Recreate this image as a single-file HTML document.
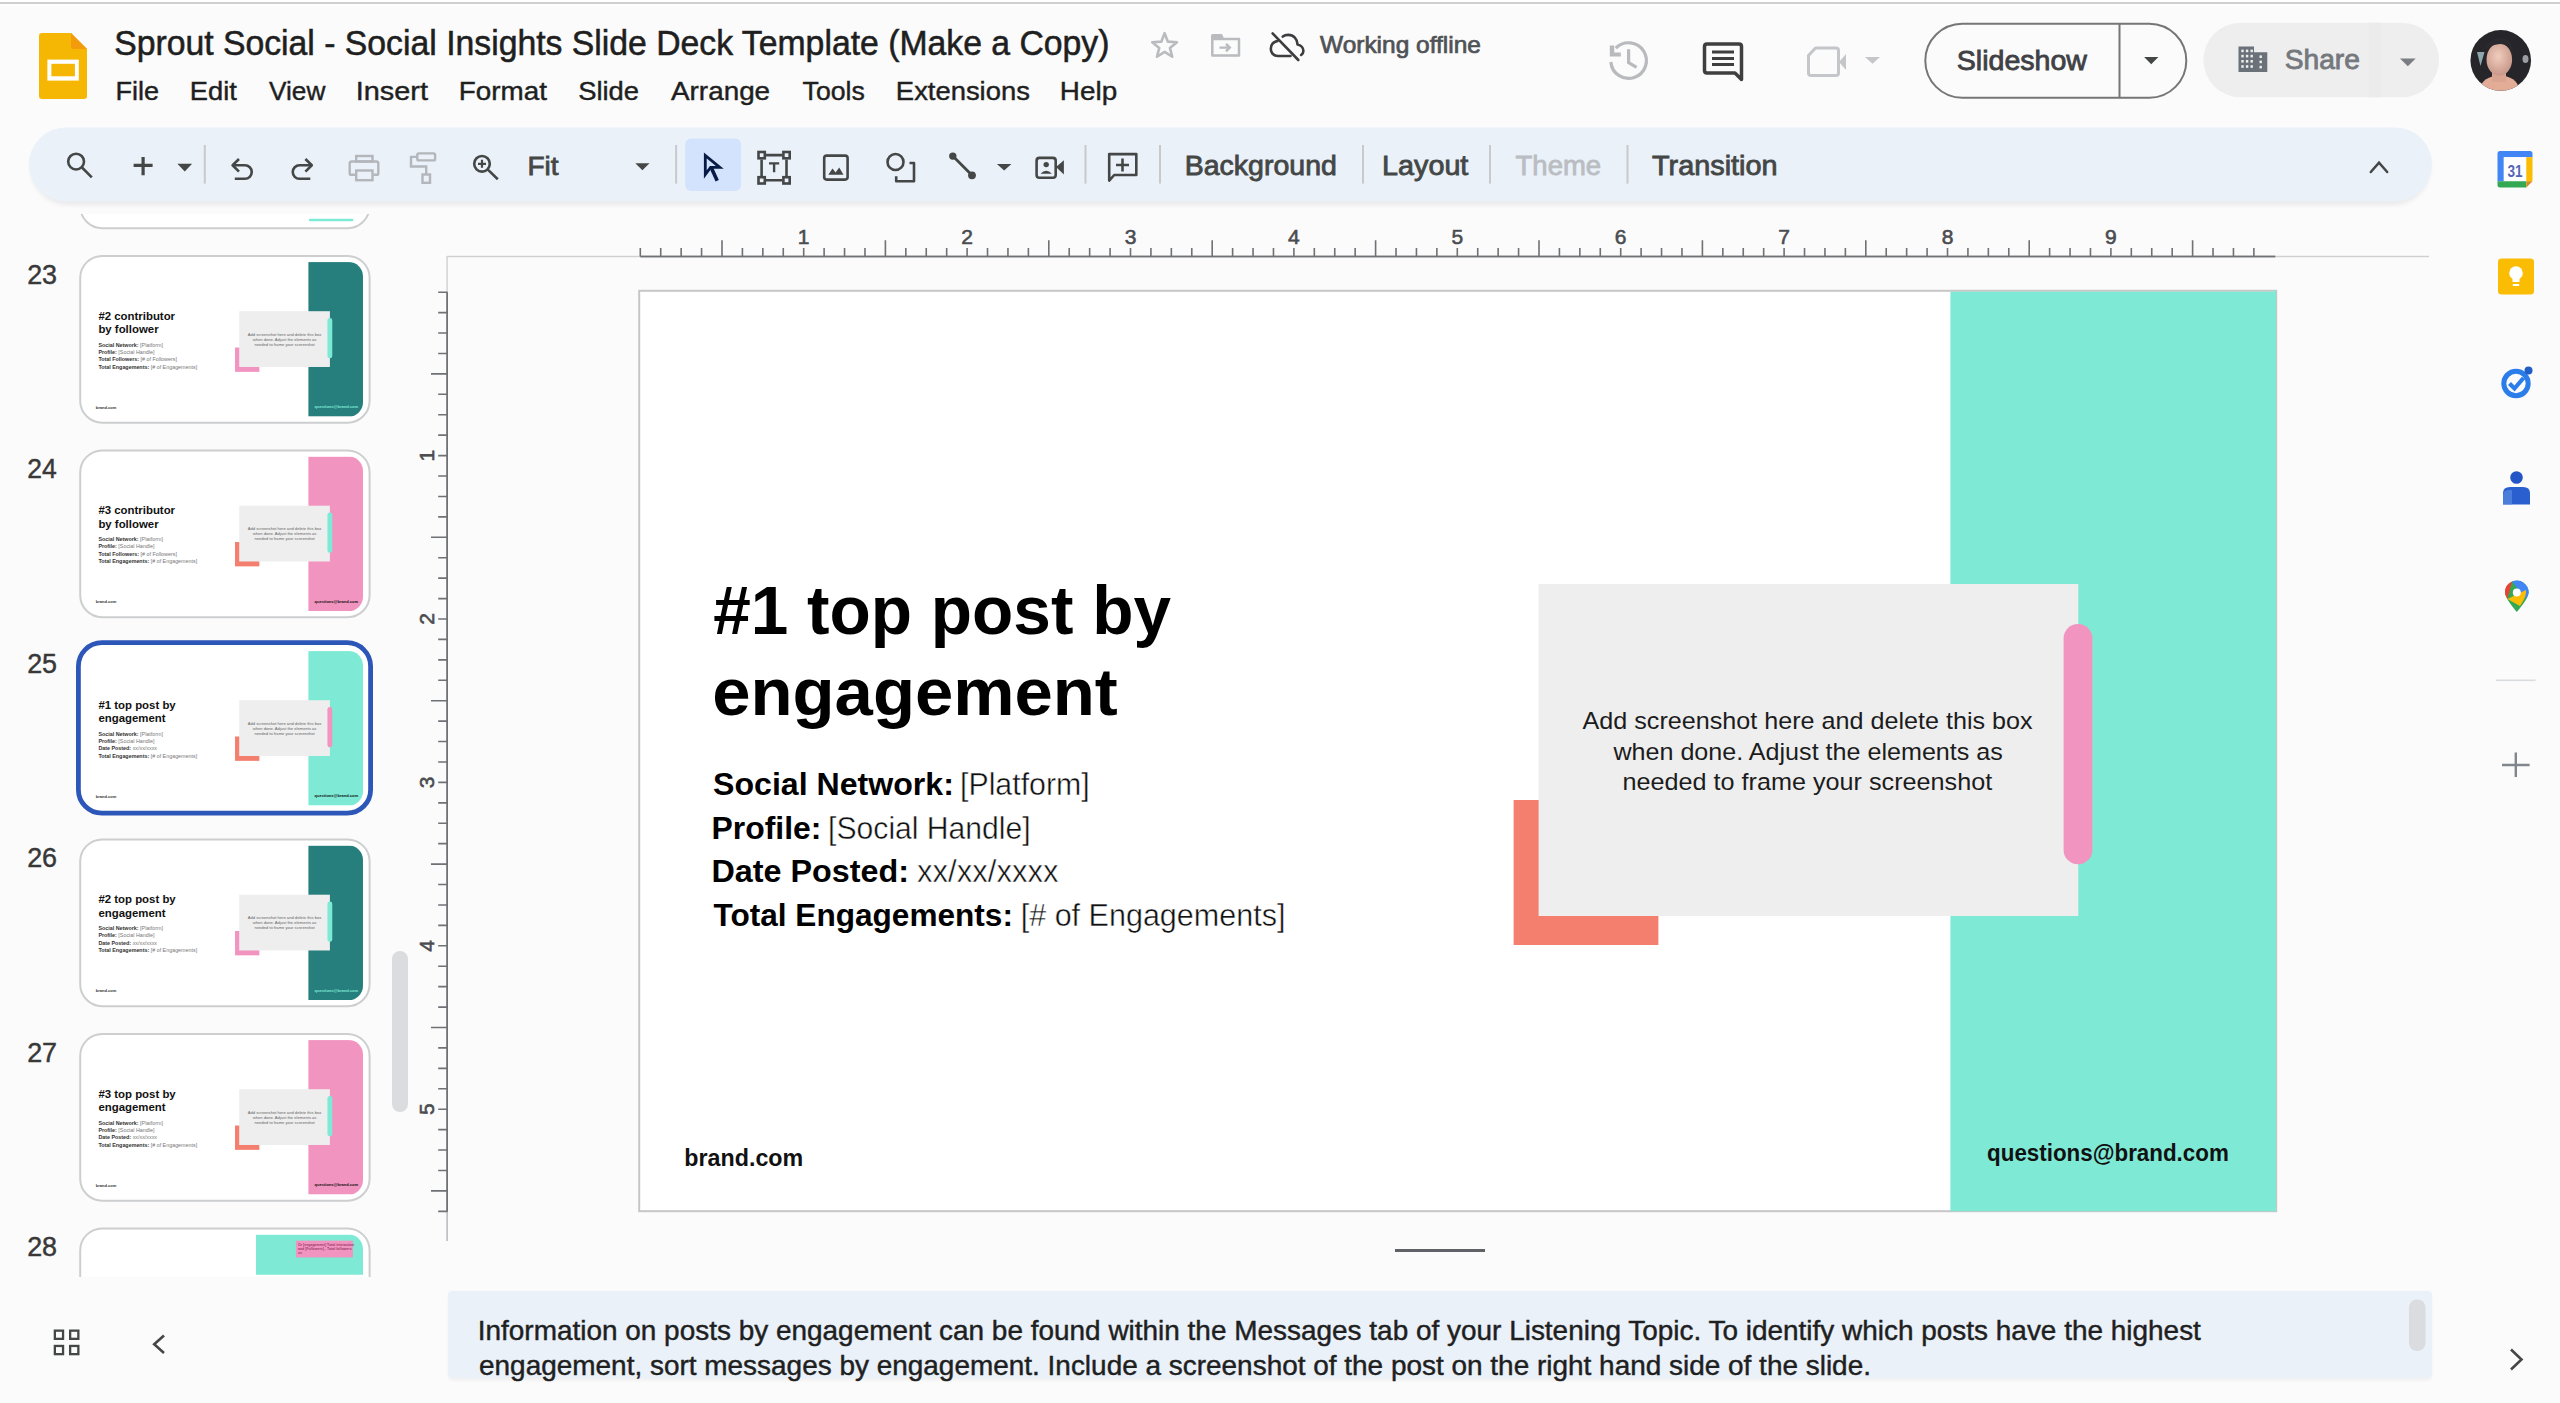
<!DOCTYPE html>
<html><head><meta charset="utf-8"><title>Slides</title>
<style>
*{margin:0;padding:0}
html,body{width:2560px;height:1403px;overflow:hidden;background:#fbfbfb}
svg{display:block;font-family:"Liberation Sans",sans-serif}
</style></head><body>
<svg width="2560" height="1403" viewBox="0 0 2560 1403">
<rect x="0" y="0" width="2560" height="2" fill="#fff"/>
<rect x="0" y="2" width="2560" height="2" fill="#cfcfcf"/>
<rect x="0" y="4" width="2560" height="2" fill="#fdfdfd"/>
<path d="M42,33 H71 L87,49 V96 Q87,99 84,99 H42 Q39,99 39,96 V36 Q39,33 42,33 Z" fill="#f6b704"/>
<path d="M71,33 L87,49 H74 Q71,49 71,46 Z" fill="#f29b0c"/>
<rect x="47.4" y="59.6" width="31.4" height="21" fill="#fff"/>
<rect x="51.4" y="63.8" width="23.5" height="12.5" fill="#f6b704"/>
<polygon points="1164.60,33.20 1167.89,41.67 1176.96,42.18 1169.93,47.93 1172.24,56.72 1164.60,51.80 1156.96,56.72 1159.27,47.93 1152.24,42.18 1161.31,41.67" fill="none" stroke="#b9bbbf" stroke-width="2.6" stroke-linejoin="round"/>
<path d="M1212.3,39 H1239 V55.6 H1212.3 Z" fill="none" stroke="#b9bbbf" stroke-width="2.5" stroke-linejoin="round"/>
<path d="M1211,39.5 V35.5 Q1211,34 1212.5,34 H1222 L1224.5,39.5 Z" fill="#b9bbbf"/>
<path d="M1219.5,47.6 H1230 M1226,43.8 L1229.8,47.6 L1226,51.4" fill="none" stroke="#b9bbbf" stroke-width="2.4"/>
<path d="M1277.5,41 C1273,42 1270.8,45.5 1270.8,49 C1270.8,53 1273.8,56 1277.8,56 H1290.5 M1282.8,36.6 C1284.3,35.4 1286.2,34.9 1288.2,34.9 C1293.6,34.9 1297.4,39 1297.6,44.6 C1301,45.3 1303.4,48 1303.4,51 C1303.4,52.6 1302.6,54 1301.2,55" fill="none" stroke="#3c3d3f" stroke-width="2.6" stroke-linecap="round" stroke-linejoin="round"/>
<path d="M1272.6,33.4 L1298.3,60" stroke="#3c3d3f" stroke-width="2.6" stroke-linecap="round"/>
<path d="M1615.8,48.2 A17.8,17.8 0 1 1 1610.85,62" fill="none" stroke="#b8babe" stroke-width="3.2"/>
<path d="M1609.8,45.5 H1614.2 V52.4 H1620.8 V56.6 H1609.8 Z" fill="#b8babe"/>
<path d="M1628.6,49.2 V62.6 L1636.6,67.4" fill="none" stroke="#b8babe" stroke-width="3.2"/>
<path d="M1707,44 H1739 Q1741.5,44 1741.5,46.5 V79.5 L1735,73 H1707 Q1704.5,73 1704.5,70.5 V46.5 Q1704.5,44 1707,44 Z" fill="none" stroke="#3f3f3f" stroke-width="3.5" stroke-linejoin="round"/>
<path d="M1712,52 H1734 M1712,58.5 H1734 M1712,64.5 H1734" stroke="#3f3f3f" stroke-width="3.2"/>
<path d="M1815.5,48 H1836 Q1838.5,48 1838.5,50.5 V73 Q1838.5,75.5 1836,75.5 H1811 Q1808.5,75.5 1808.5,73 V55.5 Z" fill="none" stroke="#c4c6ca" stroke-width="3" stroke-linejoin="round"/>
<path d="M1839,62 L1846,54 V70 Z" fill="#c4c6ca"/>
<path d="M1865,57 H1880 L1872.5,63.8 Z" fill="#c4c6ca"/>
<rect x="1925.3" y="23.7" width="261" height="74" rx="37" fill="none" stroke="#747775" stroke-width="2"/>
<rect x="2118.5" y="23.7" width="2" height="74" fill="#747775"/>
<path d="M2144.1,57.1 H2158.4 L2151.25,64.2 Z" fill="#444746"/>
<rect x="2203.4" y="22.7" width="235.6" height="74.6" rx="37.3" fill="#eeeeee"/>
<rect x="2369" y="22.7" width="12" height="74.6" fill="#ebebeb"/>
<path d="M2238.5,46.6 H2254 V52.3 H2267.3 V72 H2238.5 Z" fill="#6b7178"/>
<rect x="2241.3" y="49.6" width="2.4" height="2.6" fill="#eeeeee"/>
<rect x="2245.9" y="49.6" width="2.4" height="2.6" fill="#eeeeee"/>
<rect x="2250.5" y="49.6" width="2.4" height="2.6" fill="#eeeeee"/>
<rect x="2241.3" y="54.8" width="2.4" height="2.6" fill="#eeeeee"/>
<rect x="2245.9" y="54.8" width="2.4" height="2.6" fill="#eeeeee"/>
<rect x="2250.5" y="54.8" width="2.4" height="2.6" fill="#eeeeee"/>
<rect x="2241.3" y="60.0" width="2.4" height="2.6" fill="#eeeeee"/>
<rect x="2245.9" y="60.0" width="2.4" height="2.6" fill="#eeeeee"/>
<rect x="2250.5" y="60.0" width="2.4" height="2.6" fill="#eeeeee"/>
<rect x="2241.3" y="65.2" width="2.4" height="2.6" fill="#eeeeee"/>
<rect x="2245.9" y="65.2" width="2.4" height="2.6" fill="#eeeeee"/>
<rect x="2250.5" y="65.2" width="2.4" height="2.6" fill="#eeeeee"/>
<rect x="2259.5" y="55.4" width="2.4" height="2.6" fill="#eeeeee"/>
<rect x="2259.5" y="60.6" width="2.4" height="2.6" fill="#eeeeee"/>
<rect x="2259.5" y="65.8" width="2.4" height="2.6" fill="#eeeeee"/>
<path d="M2400,58.6 H2415.7 L2407.85,66.3 Z" fill="#7a7d82"/>
<defs><clipPath id="av"><circle cx="2500.75" cy="60.4" r="30.3"/></clipPath><radialGradient id="face" cx="0.45" cy="0.4" r="0.6"><stop offset="0" stop-color="#f0cdbd"/><stop offset="1" stop-color="#c8988a"/></radialGradient></defs>
<g clip-path="url(#av)"><rect x="2469" y="29" width="63" height="63" fill="#26262a"/><path d="M2477,52 L2484.5,52 L2480.5,66 Z" fill="#8ea6ad"/><ellipse cx="2525.5" cy="59" rx="3" ry="4" fill="#9a9ea3"/><ellipse cx="2499.5" cy="88.5" rx="19" ry="13" fill="#e2ac96"/><rect x="2492" y="70" width="14" height="12" fill="#d9a592"/><ellipse cx="2499.3" cy="59.5" rx="12.8" ry="16.2" fill="url(#face)"/><path d="M2484,50 Q2490,36 2504,38 Q2514,40 2513,58 Q2511,44 2500,44 Q2490,45 2484,50 Z" fill="#2a2a2e"/></g>
<defs><filter id="tbsh" x="-5%" y="-50%" width="110%" height="200%"><feGaussianBlur stdDeviation="2.5"/></filter></defs>
<rect x="31" y="131" width="2399" height="74" rx="37" fill="#000" opacity="0.07" filter="url(#tbsh)"/>
<rect x="29" y="127.5" width="2403" height="74" rx="37" fill="#eaf1f9"/>
<circle cx="76.1" cy="161.6" r="7.9" fill="none" stroke="#444746" stroke-width="2.6"/>
<path d="M82,167.5 L91.8,177.3" fill="none" stroke="#444746" stroke-width="2.6"/>
<path d="M133.6,165.3 H152.6 M143.1,156.9 V175.3" fill="none" stroke="#444746" stroke-width="3.2"/>
<path d="M177.4,163.7 H192.1 L184.75,171.6 Z" fill="#444746"/>
<rect x="203.8" y="145" width="2" height="38.6" fill="#c7c9cc"/>
<rect x="675.1" y="145" width="2" height="38.6" fill="#c7c9cc"/>
<rect x="1084.5" y="145" width="2" height="38.6" fill="#c7c9cc"/>
<rect x="1159.0" y="145" width="2" height="38.6" fill="#c7c9cc"/>
<rect x="1362.0" y="145" width="2" height="38.6" fill="#c7c9cc"/>
<rect x="1489.0" y="145" width="2" height="38.6" fill="#c7c9cc"/>
<rect x="1626.5" y="145" width="2" height="38.6" fill="#c7c9cc"/>
<path d="M239,159 L232.6,165.3 L239,171.6" fill="none" stroke="#444746" stroke-width="2.6" stroke-linejoin="round"/>
<path d="M233.5,165.3 H245 A6.75,6.75 0 0 1 245,178.8 H234.8" fill="none" stroke="#444746" stroke-width="2.6"/>
<path d="M305.4,159 L311.8,165.3 L305.4,171.6" fill="none" stroke="#444746" stroke-width="2.6" stroke-linejoin="round"/>
<path d="M311,165.3 H299.5 A6.75,6.75 0 0 0 299.5,178.8 H310.3" fill="none" stroke="#444746" stroke-width="2.6"/>
<rect x="356.2" y="156" width="16.3" height="5.5" fill="none" stroke="#b3b6bb" stroke-width="2.4"/>
<path d="M355,174.8 H350.5 Q349.7,174.8 349.7,174 V163.5 Q349.7,161.5 351.7,161.5 H376.3 Q378.3,161.5 378.3,163.5 V174 Q378.3,174.8 377.5,174.8 H373.5" fill="none" stroke="#b3b6bb" stroke-width="2.4"/>
<rect x="356.2" y="170.5" width="16.3" height="9.7" fill="none" stroke="#b3b6bb" stroke-width="2.4"/>
<rect x="417.3" y="153.4" width="17.8" height="7" rx="1.5" fill="none" stroke="#b3b6bb" stroke-width="2.4"/>
<path d="M417.3,156.9 H411 V166.5 H426.2 V174.5" fill="none" stroke="#b3b6bb" stroke-width="2.4"/>
<rect x="422.5" y="174.5" width="7.5" height="8.3" fill="none" stroke="#b3b6bb" stroke-width="2.4"/>
<circle cx="482" cy="163.8" r="7.8" fill="none" stroke="#444746" stroke-width="2.6"/>
<path d="M487.6,169.4 L497.8,179.3" fill="none" stroke="#444746" stroke-width="2.6"/>
<path d="M478,163.8 H486 M482,159.8 V167.8" fill="none" stroke="#444746" stroke-width="2.2"/>
<path d="M635.3,163.2 H649.5 L642.4,170.3 Z" fill="#444746"/>
<rect x="685.2" y="138.6" width="55.9" height="52.4" rx="6" fill="#d3e3fd"/>
<path d="M705.3,155.5 V174.5 L710.6,167.4 L719.8,167.4 Z" fill="none" stroke="#071b44" stroke-width="2.8" stroke-linejoin="miter"/>
<path d="M711.2,167.5 L717.2,180.8" fill="none" stroke="#071b44" stroke-width="3.6"/>
<rect x="758.5" y="152.0" width="6.3" height="6.3" fill="none" stroke="#444746" stroke-width="2.6"/>
<rect x="783.4" y="152.0" width="6.3" height="6.3" fill="none" stroke="#444746" stroke-width="2.6"/>
<rect x="758.5" y="177.2" width="6.3" height="6.3" fill="none" stroke="#444746" stroke-width="2.6"/>
<rect x="783.4" y="177.2" width="6.3" height="6.3" fill="none" stroke="#444746" stroke-width="2.6"/>
<path d="M766,155.1 H782.2 M766,180.3 H782.2 M761.6,159.5 V176 M786.5,159.5 V176" fill="none" stroke="#444746" stroke-width="2.6"/>
<path d="M769,163.4 H779.2 M774.1,163.4 V172.2" fill="none" stroke="#444746" stroke-width="2.4"/>
<rect x="824.2" y="155.6" width="23.4" height="24" rx="2.5" fill="none" stroke="#444746" stroke-width="2.6"/>
<path d="M828.3,174.8 L832.5,168.6 L835.6,172.6 L839.2,167.6 L843.5,174.8 Z" fill="#444746"/>
<circle cx="895.5" cy="162" r="8" fill="none" stroke="#444746" stroke-width="2.6"/>
<path d="M909.5,163 H914 V181.2 H896.2 V176.2" fill="none" stroke="#444746" stroke-width="2.6" stroke-linejoin="round"/>
<path d="M952.8,156.1 L972,175.3" fill="none" stroke="#444746" stroke-width="2.8"/>
<circle cx="952.8" cy="156.1" r="3.7" fill="#444746"/><circle cx="972" cy="175.3" r="3.9" fill="#444746"/>
<path d="M996.9,164 H1011.4 L1004.15,170.6 Z" fill="#444746"/>
<rect x="1036.6" y="157.9" width="19.1" height="19.9" rx="2.8" fill="none" stroke="#444746" stroke-width="2.6"/>
<path d="M1056,167 L1063.9,160.3 V174.4 Z" fill="#444746"/>
<circle cx="1046.2" cy="164.6" r="2.7" fill="#444746"/>
<path d="M1040.5,173.8 Q1046.2,167.6 1051.9,173.8 Z" fill="#444746"/>
<path d="M1109.2,154.1 H1136.3 V175 H1114.2 L1109.2,180.6 Z" fill="none" stroke="#444746" stroke-width="2.6" stroke-linejoin="round"/>
<path d="M1116,165 H1129 M1122.5,158.6 V171.4" fill="none" stroke="#444746" stroke-width="2.6"/>
<path d="M2370.8,172 L2379,162.6 L2387.2,172" fill="none" stroke="#444746" stroke-width="2.5" stroke-linecap="round"/>
<defs><clipPath id="film"><rect x="0" y="214" width="440" height="1063"/></clipPath></defs>
<g clip-path="url(#film)">
<rect x="80.2" y="61.4" width="289.4" height="166.8" rx="22" fill="#fff" stroke="#cdcecf" stroke-width="2"/>
<defs><clipPath id="tc22"><rect x="0" y="0" width="1635" height="919.5" rx="85"/></clipPath></defs>
<g transform="translate(88.3 67.6) scale(0.168)"><g clip-path="url(#tc22)">
<rect x="1313" y="900" width="265" height="14" rx="7" fill="#7ee9d5"/>
</g></g>
<rect x="80.2" y="255.9" width="289.4" height="166.8" rx="22" fill="#fff" stroke="#cdcecf" stroke-width="2"/>
<defs><clipPath id="tc23"><rect x="0" y="0" width="1635" height="919.5" rx="85"/></clipPath></defs>
<g transform="translate(88.3 262.1) scale(0.168)"><g clip-path="url(#tc23)">
<rect x="1310.2" y="0" width="325" height="919.5" fill="#267e7d"/>
<rect x="873.4" y="508.3" width="144.8" height="145" fill="#f294c0"/>
<rect x="898.4" y="292.3" width="539.7" height="332" fill="#eeeeee"/>
<rect x="1423.4" y="332.3" width="28.8" height="240.3" rx="14.4" fill="#7ee9d5"/>
<text x="60" y="341.9" font-size="68" font-weight="700" fill="#111">#2 contributor</text>
<text x="60" y="423.1" font-size="68" font-weight="700" fill="#111">by follower</text>
<text x="60" y="502.8" font-size="32" fill="#777"><tspan font-weight="700" fill="#333">Social Network:</tspan> [Platform]</text>
<text x="60" y="546.8" font-size="32" fill="#777"><tspan font-weight="700" fill="#333">Profile:</tspan> [Social Handle]</text>
<text x="60" y="590.8" font-size="32" fill="#777"><tspan font-weight="700" fill="#333">Total Followers:</tspan> [# of Followers]</text>
<text x="60" y="634.8" font-size="32" fill="#777"><tspan font-weight="700" fill="#333">Total Engagements:</tspan> [# of Engagements]</text>
<text x="1168.3" y="437.3" font-size="24.5" fill="#666" text-anchor="middle">Add screenshot here and delete this box</text>
<text x="1168.3" y="467.8" font-size="24.5" fill="#666" text-anchor="middle">when done. Adjust the elements as</text>
<text x="1168.3" y="498.3" font-size="24.5" fill="#666" text-anchor="middle">needed to frame your screenshot</text>
<text x="45" y="874.3" font-size="24" font-weight="700" fill="#333">brand.com</text>
<text x="1347" y="869" font-size="24" font-weight="700" fill="#7ee9d5">questions@brand.com</text>
</g></g>
<rect x="80.2" y="450.4" width="289.4" height="166.8" rx="22" fill="#fff" stroke="#cdcecf" stroke-width="2"/>
<defs><clipPath id="tc24"><rect x="0" y="0" width="1635" height="919.5" rx="85"/></clipPath></defs>
<g transform="translate(88.3 456.6) scale(0.168)"><g clip-path="url(#tc24)">
<rect x="1310.2" y="0" width="325" height="919.5" fill="#f294c0"/>
<rect x="873.4" y="508.3" width="144.8" height="145" fill="#f47f6f"/>
<rect x="898.4" y="292.3" width="539.7" height="332" fill="#eeeeee"/>
<rect x="1423.4" y="332.3" width="28.8" height="240.3" rx="14.4" fill="#7ee9d5"/>
<text x="60" y="341.9" font-size="68" font-weight="700" fill="#111">#3 contributor</text>
<text x="60" y="423.1" font-size="68" font-weight="700" fill="#111">by follower</text>
<text x="60" y="502.8" font-size="32" fill="#777"><tspan font-weight="700" fill="#333">Social Network:</tspan> [Platform]</text>
<text x="60" y="546.8" font-size="32" fill="#777"><tspan font-weight="700" fill="#333">Profile:</tspan> [Social Handle]</text>
<text x="60" y="590.8" font-size="32" fill="#777"><tspan font-weight="700" fill="#333">Total Followers:</tspan> [# of Followers]</text>
<text x="60" y="634.8" font-size="32" fill="#777"><tspan font-weight="700" fill="#333">Total Engagements:</tspan> [# of Engagements]</text>
<text x="1168.3" y="437.3" font-size="24.5" fill="#666" text-anchor="middle">Add screenshot here and delete this box</text>
<text x="1168.3" y="467.8" font-size="24.5" fill="#666" text-anchor="middle">when done. Adjust the elements as</text>
<text x="1168.3" y="498.3" font-size="24.5" fill="#666" text-anchor="middle">needed to frame your screenshot</text>
<text x="45" y="874.3" font-size="24" font-weight="700" fill="#333">brand.com</text>
<text x="1347" y="869" font-size="24" font-weight="700" fill="#111">questions@brand.com</text>
</g></g>
<rect x="80.2" y="644.9" width="289.4" height="166.8" rx="22" fill="#fff" stroke="#fff" stroke-width="2"/>
<defs><clipPath id="tc25"><rect x="0" y="0" width="1635" height="919.5" rx="85"/></clipPath></defs>
<g transform="translate(88.3 651.1) scale(0.168)"><g clip-path="url(#tc25)">
<rect x="1310.2" y="0" width="325" height="919.5" fill="#7ee9d5"/>
<rect x="873.4" y="508.3" width="144.8" height="145" fill="#f47f6f"/>
<rect x="898.4" y="292.3" width="539.7" height="332" fill="#eeeeee"/>
<rect x="1423.4" y="332.3" width="28.8" height="240.3" rx="14.4" fill="#f294c0"/>
<text x="60" y="341.9" font-size="68" font-weight="700" fill="#111">#1 top post by</text>
<text x="60" y="423.1" font-size="68" font-weight="700" fill="#111">engagement</text>
<text x="60" y="502.8" font-size="32" fill="#777"><tspan font-weight="700" fill="#333">Social Network:</tspan> [Platform]</text>
<text x="60" y="546.8" font-size="32" fill="#777"><tspan font-weight="700" fill="#333">Profile:</tspan> [Social Handle]</text>
<text x="60" y="590.8" font-size="32" fill="#777"><tspan font-weight="700" fill="#333">Date Posted:</tspan> xx/xx/xxxx</text>
<text x="60" y="634.8" font-size="32" fill="#777"><tspan font-weight="700" fill="#333">Total Engagements:</tspan> [# of Engagements]</text>
<text x="1168.3" y="437.3" font-size="24.5" fill="#666" text-anchor="middle">Add screenshot here and delete this box</text>
<text x="1168.3" y="467.8" font-size="24.5" fill="#666" text-anchor="middle">when done. Adjust the elements as</text>
<text x="1168.3" y="498.3" font-size="24.5" fill="#666" text-anchor="middle">needed to frame your screenshot</text>
<text x="45" y="874.3" font-size="24" font-weight="700" fill="#333">brand.com</text>
<text x="1347" y="869" font-size="24" font-weight="700" fill="#111">questions@brand.com</text>
</g></g>
<rect x="80.2" y="839.4" width="289.4" height="166.8" rx="22" fill="#fff" stroke="#cdcecf" stroke-width="2"/>
<defs><clipPath id="tc26"><rect x="0" y="0" width="1635" height="919.5" rx="85"/></clipPath></defs>
<g transform="translate(88.3 845.6) scale(0.168)"><g clip-path="url(#tc26)">
<rect x="1310.2" y="0" width="325" height="919.5" fill="#267e7d"/>
<rect x="873.4" y="508.3" width="144.8" height="145" fill="#f294c0"/>
<rect x="898.4" y="292.3" width="539.7" height="332" fill="#eeeeee"/>
<rect x="1423.4" y="332.3" width="28.8" height="240.3" rx="14.4" fill="#7ee9d5"/>
<text x="60" y="341.9" font-size="68" font-weight="700" fill="#111">#2 top post by</text>
<text x="60" y="423.1" font-size="68" font-weight="700" fill="#111">engagement</text>
<text x="60" y="502.8" font-size="32" fill="#777"><tspan font-weight="700" fill="#333">Social Network:</tspan> [Platform]</text>
<text x="60" y="546.8" font-size="32" fill="#777"><tspan font-weight="700" fill="#333">Profile:</tspan> [Social Handle]</text>
<text x="60" y="590.8" font-size="32" fill="#777"><tspan font-weight="700" fill="#333">Date Posted:</tspan> xx/xx/xxxx</text>
<text x="60" y="634.8" font-size="32" fill="#777"><tspan font-weight="700" fill="#333">Total Engagements:</tspan> [# of Engagements]</text>
<text x="1168.3" y="437.3" font-size="24.5" fill="#666" text-anchor="middle">Add screenshot here and delete this box</text>
<text x="1168.3" y="467.8" font-size="24.5" fill="#666" text-anchor="middle">when done. Adjust the elements as</text>
<text x="1168.3" y="498.3" font-size="24.5" fill="#666" text-anchor="middle">needed to frame your screenshot</text>
<text x="45" y="874.3" font-size="24" font-weight="700" fill="#333">brand.com</text>
<text x="1347" y="869" font-size="24" font-weight="700" fill="#7ee9d5">questions@brand.com</text>
</g></g>
<rect x="80.2" y="1033.9" width="289.4" height="166.8" rx="22" fill="#fff" stroke="#cdcecf" stroke-width="2"/>
<defs><clipPath id="tc27"><rect x="0" y="0" width="1635" height="919.5" rx="85"/></clipPath></defs>
<g transform="translate(88.3 1040.1) scale(0.168)"><g clip-path="url(#tc27)">
<rect x="1310.2" y="0" width="325" height="919.5" fill="#f294c0"/>
<rect x="873.4" y="508.3" width="144.8" height="145" fill="#f47f6f"/>
<rect x="898.4" y="292.3" width="539.7" height="332" fill="#eeeeee"/>
<rect x="1423.4" y="332.3" width="28.8" height="240.3" rx="14.4" fill="#7ee9d5"/>
<text x="60" y="341.9" font-size="68" font-weight="700" fill="#111">#3 top post by</text>
<text x="60" y="423.1" font-size="68" font-weight="700" fill="#111">engagement</text>
<text x="60" y="502.8" font-size="32" fill="#777"><tspan font-weight="700" fill="#333">Social Network:</tspan> [Platform]</text>
<text x="60" y="546.8" font-size="32" fill="#777"><tspan font-weight="700" fill="#333">Profile:</tspan> [Social Handle]</text>
<text x="60" y="590.8" font-size="32" fill="#777"><tspan font-weight="700" fill="#333">Date Posted:</tspan> xx/xx/xxxx</text>
<text x="60" y="634.8" font-size="32" fill="#777"><tspan font-weight="700" fill="#333">Total Engagements:</tspan> [# of Engagements]</text>
<text x="1168.3" y="437.3" font-size="24.5" fill="#666" text-anchor="middle">Add screenshot here and delete this box</text>
<text x="1168.3" y="467.8" font-size="24.5" fill="#666" text-anchor="middle">when done. Adjust the elements as</text>
<text x="1168.3" y="498.3" font-size="24.5" fill="#666" text-anchor="middle">needed to frame your screenshot</text>
<text x="45" y="874.3" font-size="24" font-weight="700" fill="#333">brand.com</text>
<text x="1347" y="869" font-size="24" font-weight="700" fill="#111">questions@brand.com</text>
</g></g>
<rect x="80.2" y="1228.4" width="289.4" height="166.8" rx="22" fill="#fff" stroke="#cdcecf" stroke-width="2"/>
<defs><clipPath id="tc28"><rect x="0" y="0" width="1635" height="919.5" rx="85"/></clipPath></defs>
<g transform="translate(88.3 1234.6) scale(0.168)"><g clip-path="url(#tc28)">
<rect x="998" y="0" width="637" height="239" fill="#7ee9d5"/>
<rect x="1236" y="36" width="339" height="100" fill="#f294c0"/>
<text x="1248" y="66" font-size="21" font-weight="700" fill="#9c3a6c">Or [engagement] Total interaction</text>
<text x="1248" y="92" font-size="21" font-weight="700" fill="#9c3a6c">and [Followers] - Total followers</text>
<text x="1248" y="118" font-size="21" font-weight="700" fill="#9c3a6c">xx</text>
</g></g>
<rect x="78.4" y="642.7" width="292.2" height="170.5" rx="23.5" fill="none" stroke="#2c56b8" stroke-width="4.8"/>
</g>
<rect x="392" y="951" width="16" height="161" rx="8" fill="#dadce0"/>
<rect x="54.85" y="1330.65" width="8.2" height="8.2" fill="none" stroke="#444746" stroke-width="2.3"/>
<rect x="70.15" y="1330.65" width="8.2" height="8.2" fill="none" stroke="#444746" stroke-width="2.3"/>
<rect x="54.85" y="1345.95" width="8.2" height="8.2" fill="none" stroke="#444746" stroke-width="2.3"/>
<rect x="70.15" y="1345.95" width="8.2" height="8.2" fill="none" stroke="#444746" stroke-width="2.3"/>
<path d="M164,1335.5 L154.2,1344.3 L164,1353" fill="none" stroke="#444746" stroke-width="2.6"/>
<rect x="447" y="255.8" width="1982" height="1.4" fill="#cfd0d2"/>
<rect x="640.3" y="255.6" width="1635" height="1.8" fill="#6f7175"/>
<path d="M640.30,248 V256.5 M660.72,248 V256.5 M681.15,248 V256.5 M701.57,248 V256.5 M722.00,240.3 V256.5 M742.42,248 V256.5 M762.85,248 V256.5 M783.27,248 V256.5 M803.70,248 V256.5 M824.12,248 V256.5 M844.55,248 V256.5 M864.97,248 V256.5 M885.40,240.3 V256.5 M905.83,248 V256.5 M926.25,248 V256.5 M946.67,248 V256.5 M967.10,248 V256.5 M987.52,248 V256.5 M1007.95,248 V256.5 M1028.38,248 V256.5 M1048.80,240.3 V256.5 M1069.22,248 V256.5 M1089.65,248 V256.5 M1110.08,248 V256.5 M1130.50,248 V256.5 M1150.92,248 V256.5 M1171.35,248 V256.5 M1191.78,248 V256.5 M1212.20,240.3 V256.5 M1232.62,248 V256.5 M1253.05,248 V256.5 M1273.47,248 V256.5 M1293.90,248 V256.5 M1314.32,248 V256.5 M1334.75,248 V256.5 M1355.17,248 V256.5 M1375.60,240.3 V256.5 M1396.03,248 V256.5 M1416.45,248 V256.5 M1436.88,248 V256.5 M1457.30,248 V256.5 M1477.72,248 V256.5 M1498.15,248 V256.5 M1518.57,248 V256.5 M1539.00,240.3 V256.5 M1559.42,248 V256.5 M1579.85,248 V256.5 M1600.28,248 V256.5 M1620.70,248 V256.5 M1641.12,248 V256.5 M1661.55,248 V256.5 M1681.97,248 V256.5 M1702.40,240.3 V256.5 M1722.83,248 V256.5 M1743.25,248 V256.5 M1763.67,248 V256.5 M1784.10,248 V256.5 M1804.53,248 V256.5 M1824.95,248 V256.5 M1845.38,248 V256.5 M1865.80,240.3 V256.5 M1886.22,248 V256.5 M1906.65,248 V256.5 M1927.08,248 V256.5 M1947.50,248 V256.5 M1967.92,248 V256.5 M1988.35,248 V256.5 M2008.78,248 V256.5 M2029.20,240.3 V256.5 M2049.62,248 V256.5 M2070.05,248 V256.5 M2090.47,248 V256.5 M2110.90,248 V256.5 M2131.32,248 V256.5 M2151.75,248 V256.5 M2172.18,248 V256.5 M2192.60,240.3 V256.5 M2213.03,248 V256.5 M2233.45,248 V256.5 M2253.88,248 V256.5" stroke="#6f7175" stroke-width="1.6"/>
<rect x="446.4" y="256" width="1.4" height="36" fill="#cfd0d2"/>
<rect x="446.3" y="1211" width="1.6" height="30" fill="#b9bbbe"/>
<rect x="446.2" y="292.2" width="1.8" height="919.2" fill="#6f7175"/>
<path d="M438.2,292.20 H447.5 M438.2,312.62 H447.5 M438.2,333.05 H447.5 M438.2,353.48 H447.5 M431,373.90 H447.5 M438.2,394.32 H447.5 M438.2,414.75 H447.5 M438.2,435.17 H447.5 M438.2,455.60 H447.5 M438.2,476.02 H447.5 M438.2,496.45 H447.5 M438.2,516.88 H447.5 M431,537.30 H447.5 M438.2,557.73 H447.5 M438.2,578.15 H447.5 M438.2,598.58 H447.5 M438.2,619.00 H447.5 M438.2,639.42 H447.5 M438.2,659.85 H447.5 M438.2,680.27 H447.5 M431,700.70 H447.5 M438.2,721.12 H447.5 M438.2,741.55 H447.5 M438.2,761.98 H447.5 M438.2,782.40 H447.5 M438.2,802.83 H447.5 M438.2,823.25 H447.5 M438.2,843.67 H447.5 M431,864.10 H447.5 M438.2,884.53 H447.5 M438.2,904.95 H447.5 M438.2,925.38 H447.5 M438.2,945.80 H447.5 M438.2,966.22 H447.5 M438.2,986.65 H447.5 M438.2,1007.08 H447.5 M431,1027.50 H447.5 M438.2,1047.92 H447.5 M438.2,1068.35 H447.5 M438.2,1088.78 H447.5 M438.2,1109.20 H447.5 M438.2,1129.62 H447.5 M438.2,1150.05 H447.5 M438.2,1170.47 H447.5 M431,1190.90 H447.5 M438.2,1211.33 H447.5" stroke="#6f7175" stroke-width="1.6"/>
<rect x="639.2" y="290.8" width="1637" height="920.4" fill="#fff" stroke="#c6c6c6" stroke-width="2"/>
<g transform="translate(640.2 291.7)">
<rect x="1310.2" y="0" width="325" height="919.5" fill="#7ee9d5"/>
<rect x="873.4" y="508.3" width="144.8" height="145" fill="#f47f6f"/>
<rect x="898.4" y="292.3" width="539.7" height="332" fill="#eeeeee"/>
<rect x="1423.4" y="332.3" width="28.8" height="240.3" rx="14.4" fill="#f294c0"/>
</g>
<rect x="2274" y="290" width="2" height="921" fill="#7ee9d5"/>
<rect x="1395" y="1249" width="90" height="3" fill="#5f6368"/>
<defs><filter id="ntsh" x="-2%" y="-20%" width="104%" height="140%"><feGaussianBlur stdDeviation="2"/></filter></defs>
<rect x="449" y="1293" width="1982" height="87" rx="4" fill="#000" opacity="0.05" filter="url(#ntsh)"/>
<rect x="448" y="1291" width="1984" height="87" rx="4" fill="#eaf1f9"/>
<rect x="2409" y="1299.5" width="16.5" height="51.5" rx="8" fill="#dadce0"/>
<path d="M2511,1349.5 L2521.5,1359.5 L2511,1369.5" fill="none" stroke="#444746" stroke-width="2.6"/>
<path d="M2500,151 H2530 Q2532.5,151 2532.5,153.5 V157.2 H2503.8 V181.2 H2497.5 V153.5 Q2497.5,151 2500,151 Z" fill="#4285f4"/>
<rect x="2503.8" y="157.2" width="22.5" height="24" fill="#fff"/>
<path d="M2497.5,181.2 H2526.3 V187.5 H2500 Q2497.5,187.5 2497.5,185 Z" fill="#34a853"/>
<path d="M2526.3,157.2 H2532.5 V181.2 H2526.3 Z" fill="#fbbc04"/>
<path d="M2526.3,181.2 H2532.5 L2526.3,187.5 Z" fill="#d68a1c"/>
<text x="2515" y="177.5" font-size="16" font-weight="700" fill="#5565b8" text-anchor="middle" transform="translate(2515 0) scale(0.85 1) translate(-2515 0)">31</text>
<rect x="2498" y="258.4" width="36" height="36" rx="3.5" fill="#fbbc04"/>
<circle cx="2516" cy="273" r="6.8" fill="#fff"/>
<rect x="2512.5" y="277" width="7" height="5" fill="#fff"/>
<rect x="2512.8" y="284" width="6.4" height="2" fill="#fff"/>
<circle cx="2516" cy="383.5" r="12.2" fill="none" stroke="#2b7de9" stroke-width="5"/>
<path d="M2509.5,383.5 L2514.5,388.5 L2523.5,378" fill="none" stroke="#2b7de9" stroke-width="4.2"/>
<circle cx="2528.5" cy="370.5" r="4" fill="#1f5fc7"/>
<circle cx="2516.5" cy="477.5" r="6.3" fill="#2355c6"/>
<path d="M2503,504.5 V493 Q2503,487 2510,487 H2523 Q2530,487 2530,493 V504.5 Z" fill="#2a5fd0"/>
<path d="M2503,504.5 V496 Q2503,490 2509,490 H2512 V504.5 Z" fill="#5a8ae0" opacity="0.7"/>
<path d="M2516.8,612 Q2505,598 2505,592.5 A11.8,11.8 0 0 1 2528.6,592.5 Q2528.6,598 2516.8,612 Z" fill="#34a853"/>
<path d="M2505,592.5 A11.8,11.8 0 0 1 2512,581.5 L2507.5,599 Q2505,595 2505,592.5 Z" fill="#ea4335"/>
<path d="M2512,581.5 A11.8,11.8 0 0 1 2528.6,592.5 Q2528.6,595 2526,599 Z" fill="#4285f4"/>
<path d="M2507.5,599 L2526,590 Q2527,596 2520,606 Z" fill="#fbbc04"/>
<circle cx="2516.8" cy="592.5" r="4" fill="#fff"/>
<rect x="2496" y="679.5" width="39.6" height="1.6" fill="#dadce0"/>
<path d="M2502,765 H2529.6 M2515.8,752.5 V777" stroke="#80868b" stroke-width="2.4"/>
<text x="803.7" y="243.8" font-size="21" font-weight="400" fill="#4a4c50" stroke="#4a4c50" stroke-width="0.6" text-anchor="middle">1</text>
<text x="967.1" y="243.8" font-size="21" font-weight="400" fill="#4a4c50" stroke="#4a4c50" stroke-width="0.6" text-anchor="middle">2</text>
<text x="1130.5" y="243.8" font-size="21" font-weight="400" fill="#4a4c50" stroke="#4a4c50" stroke-width="0.6" text-anchor="middle">3</text>
<text x="1293.9" y="243.8" font-size="21" font-weight="400" fill="#4a4c50" stroke="#4a4c50" stroke-width="0.6" text-anchor="middle">4</text>
<text x="1457.3" y="243.8" font-size="21" font-weight="400" fill="#4a4c50" stroke="#4a4c50" stroke-width="0.6" text-anchor="middle">5</text>
<text x="1620.7" y="243.8" font-size="21" font-weight="400" fill="#4a4c50" stroke="#4a4c50" stroke-width="0.6" text-anchor="middle">6</text>
<text x="1784.1" y="243.8" font-size="21" font-weight="400" fill="#4a4c50" stroke="#4a4c50" stroke-width="0.6" text-anchor="middle">7</text>
<text x="1947.5" y="243.8" font-size="21" font-weight="400" fill="#4a4c50" stroke="#4a4c50" stroke-width="0.6" text-anchor="middle">8</text>
<text x="2110.9" y="243.8" font-size="21" font-weight="400" fill="#4a4c50" stroke="#4a4c50" stroke-width="0.6" text-anchor="middle">9</text>
<text transform="translate(434.3 455.6) rotate(-90)" x="0" y="0" font-size="21" font-weight="400" fill="#4a4c50" stroke="#4a4c50" stroke-width="0.6" text-anchor="middle">1</text>
<text transform="translate(434.3 619.0) rotate(-90)" x="0" y="0" font-size="21" font-weight="400" fill="#4a4c50" stroke="#4a4c50" stroke-width="0.6" text-anchor="middle">2</text>
<text transform="translate(434.3 782.4) rotate(-90)" x="0" y="0" font-size="21" font-weight="400" fill="#4a4c50" stroke="#4a4c50" stroke-width="0.6" text-anchor="middle">3</text>
<text transform="translate(434.3 945.8) rotate(-90)" x="0" y="0" font-size="21" font-weight="400" fill="#4a4c50" stroke="#4a4c50" stroke-width="0.6" text-anchor="middle">4</text>
<text transform="translate(434.3 1109.2) rotate(-90)" x="0" y="0" font-size="21" font-weight="400" fill="#4a4c50" stroke="#4a4c50" stroke-width="0.6" text-anchor="middle">5</text>
<text transform="translate(114.15 55.20) scale(0.9494 1)" font-size="35.56" font-weight="400" fill="#1f1f1f" stroke="#1f1f1f" stroke-width="0.57">Sprout Social - Social Insights Slide Deck Template (Make a Copy)</text>
<text transform="translate(115.49 99.70) scale(1.0177 1)" font-size="26.60" font-weight="400" fill="#1f1f1f" stroke="#1f1f1f" stroke-width="0.43">File</text>
<text transform="translate(189.87 99.70) scale(1.0264 1)" font-size="26.60" font-weight="400" fill="#1f1f1f" stroke="#1f1f1f" stroke-width="0.43">Edit</text>
<text transform="translate(269.00 99.70) scale(0.9863 1)" font-size="26.60" font-weight="400" fill="#1f1f1f" stroke="#1f1f1f" stroke-width="0.43">View</text>
<text transform="translate(355.75 99.70) scale(1.0848 1)" font-size="26.60" font-weight="400" fill="#1f1f1f" stroke="#1f1f1f" stroke-width="0.43">Insert</text>
<text transform="translate(458.83 99.70) scale(1.0457 1)" font-size="26.60" font-weight="400" fill="#1f1f1f" stroke="#1f1f1f" stroke-width="0.43">Format</text>
<text transform="translate(578.14 99.70) scale(1.0309 1)" font-size="26.60" font-weight="400" fill="#1f1f1f" stroke="#1f1f1f" stroke-width="0.43">Slide</text>
<text transform="translate(671.00 99.70) scale(1.0477 1)" font-size="26.60" font-weight="400" fill="#1f1f1f" stroke="#1f1f1f" stroke-width="0.43">Arrange</text>
<text transform="translate(802.58 99.70) scale(1.0026 1)" font-size="26.60" font-weight="400" fill="#1f1f1f" stroke="#1f1f1f" stroke-width="0.43">Tools</text>
<text transform="translate(895.86 99.70) scale(1.0300 1)" font-size="26.60" font-weight="400" fill="#1f1f1f" stroke="#1f1f1f" stroke-width="0.43">Extensions</text>
<text transform="translate(1059.82 99.70) scale(1.0477 1)" font-size="26.60" font-weight="400" fill="#1f1f1f" stroke="#1f1f1f" stroke-width="0.43">Help</text>
<text transform="translate(1320.00 52.70) scale(1.0494 1)" font-size="23.32" font-weight="400" fill="#4f5256" stroke="#4f5256" stroke-width="0.70">Working offline</text>
<text transform="translate(1956.81 69.70) scale(1.0191 1)" font-size="28.02" font-weight="400" fill="#3f4145" stroke="#3f4145" stroke-width="0.84">Slideshow</text>
<text transform="translate(2284.72 69.30) scale(1.0113 1)" font-size="27.88" font-weight="400" fill="#75787d" stroke="#75787d" stroke-width="0.84">Share</text>
<text transform="translate(527.41 175.40) scale(1.0580 1)" font-size="26.45" font-weight="400" fill="#444746" stroke="#444746" stroke-width="0.79">Fit</text>
<text transform="translate(1184.77 174.50) scale(1.0661 1)" font-size="26.74" font-weight="400" fill="#444746" stroke="#444746" stroke-width="0.80">Background</text>
<text transform="translate(1382.05 174.50) scale(1.0756 1)" font-size="26.74" font-weight="400" fill="#444746" stroke="#444746" stroke-width="0.80">Layout</text>
<text transform="translate(1515.57 174.50) scale(1.0280 1)" font-size="26.74" font-weight="400" fill="#babdc2" stroke="#babdc2" stroke-width="0.80">Theme</text>
<text transform="translate(1652.05 174.50) scale(1.0788 1)" font-size="26.74" font-weight="400" fill="#444746" stroke="#444746" stroke-width="0.80">Transition</text>
<text transform="translate(713.24 633.60) scale(0.9975 1)" font-size="67.70" font-weight="700" fill="#000">#1 top post by</text>
<text transform="translate(712.15 714.80) scale(1.0192 1)" font-size="67.58" font-weight="700" fill="#000">engagement</text>
<text transform="translate(713.00 794.50) scale(1.0042 1)" font-size="32.00" font-weight="700" fill="#000">Social Network:</text>
<text transform="translate(960.00 794.50) scale(0.9479 1)" font-size="32.00" font-weight="400" fill="#111" stroke="#fff" stroke-width="0.45">[Platform]</text>
<text transform="translate(711.51 838.50) scale(0.9964 1)" font-size="32.00" font-weight="700" fill="#000">Profile:</text>
<text transform="translate(828.12 838.50) scale(0.9416 1)" font-size="32.00" font-weight="400" fill="#111" stroke="#fff" stroke-width="0.45">[Social Handle]</text>
<text transform="translate(711.48 882.00) scale(1.0108 1)" font-size="32.00" font-weight="700" fill="#000">Date Posted:</text>
<text transform="translate(917.00 882.00) scale(0.9713 1)" font-size="32.00" font-weight="400" fill="#111" stroke="#fff" stroke-width="0.45">xx/xx/xxxx</text>
<text transform="translate(713.50 926.00) scale(0.9871 1)" font-size="32.00" font-weight="700" fill="#000">Total Engagements:</text>
<text transform="translate(1020.69 926.00) scale(0.9542 1)" font-size="32.00" font-weight="400" fill="#111" stroke="#fff" stroke-width="0.45">[# of Engagements]</text>
<text transform="translate(1582.50 729.00) scale(1.0288 1)" font-size="24.46" font-weight="400" fill="#1c1c1c">Add screenshot here and delete this box</text>
<text transform="translate(1613.39 759.50) scale(1.0271 1)" font-size="24.46" font-weight="400" fill="#1c1c1c">when done. Adjust the elements as</text>
<text transform="translate(1622.42 790.00) scale(1.0306 1)" font-size="24.46" font-weight="400" fill="#1c1c1c">needed to frame your screenshot</text>
<text transform="translate(684.35 1166.00) scale(0.9618 1)" font-size="24.18" font-weight="700" fill="#111">brand.com</text>
<text transform="translate(1987.10 1160.70) scale(0.9251 1)" font-size="24.18" font-weight="700" fill="#111">questions@brand.com</text>
<text transform="translate(477.72 1339.80) scale(1.0234 1)" font-size="27.31" font-weight="400" fill="#1f1f1f" stroke="#1f1f1f" stroke-width="0.44">Information on posts by engagement can be found within the Messages tab of your Listening Topic. To identify which posts have the highest</text>
<text transform="translate(479.03 1374.60) scale(1.0236 1)" font-size="27.31" font-weight="400" fill="#1f1f1f" stroke="#1f1f1f" stroke-width="0.44">engagement, sort messages by engagement. Include a screenshot of the post on the right hand side of the slide.</text>
<text transform="translate(27.14 283.70) scale(0.9760 1)" font-size="27.59" font-weight="400" fill="#383838" stroke="#383838" stroke-width="0.44">23</text>
<text transform="translate(27.16 478.20) scale(0.9614 1)" font-size="27.59" font-weight="400" fill="#383838" stroke="#383838" stroke-width="0.44">24</text>
<text transform="translate(27.14 672.70) scale(0.9760 1)" font-size="27.59" font-weight="400" fill="#383838" stroke="#383838" stroke-width="0.44">25</text>
<text transform="translate(27.14 867.20) scale(0.9760 1)" font-size="27.59" font-weight="400" fill="#383838" stroke="#383838" stroke-width="0.44">26</text>
<text transform="translate(27.14 1061.70) scale(0.9760 1)" font-size="27.59" font-weight="400" fill="#383838" stroke="#383838" stroke-width="0.44">27</text>
<text transform="translate(27.14 1256.20) scale(0.9760 1)" font-size="27.59" font-weight="400" fill="#383838" stroke="#383838" stroke-width="0.44">28</text>
</svg>
</body></html>
